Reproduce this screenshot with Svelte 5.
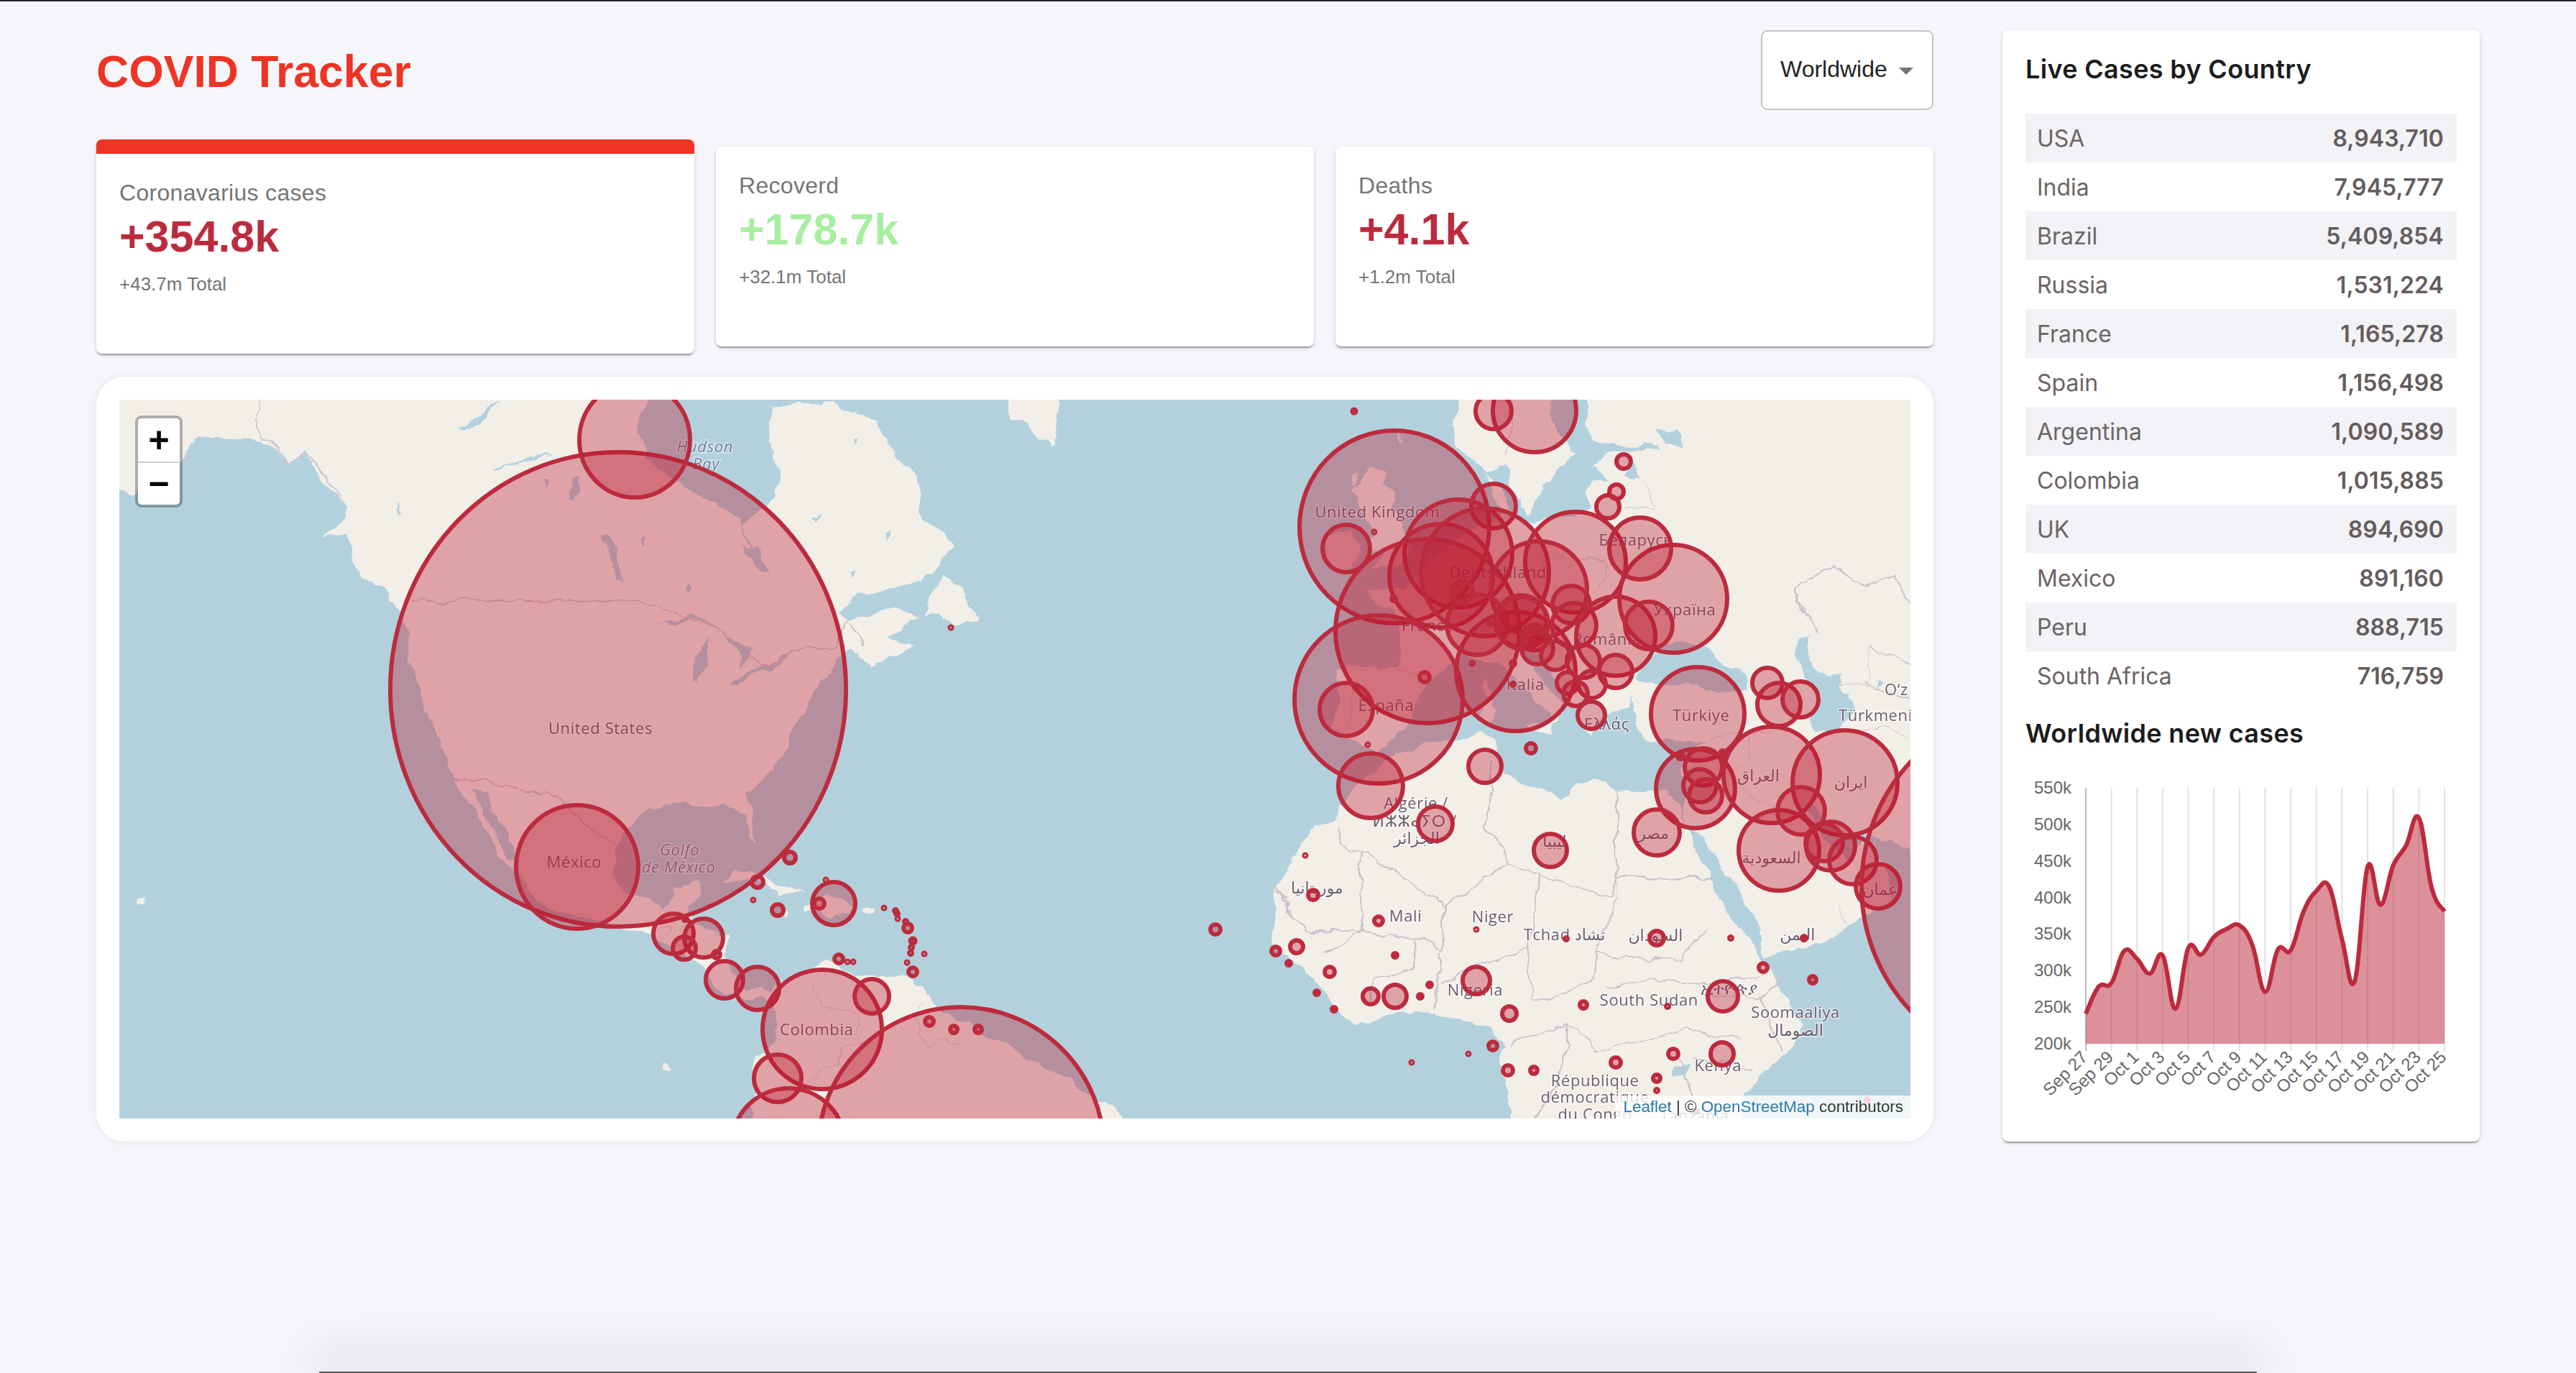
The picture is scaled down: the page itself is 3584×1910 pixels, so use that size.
<script lang="ts">
	const stats = [
		{ title: 'Coronavarius cases', value: '+354.8k', total: '+43.7m Total', tone: 'red', active: true },
		{ title: 'Recoverd', value: '+178.7k', total: '+32.1m Total', tone: 'green', active: false },
		{ title: 'Deaths', value: '+4.1k', total: '+1.2m Total', tone: 'red', active: false }
	];

	const countries = [
		['USA', '8,943,710'], ['India', '7,945,777'], ['Brazil', '5,409,854'], ['Russia', '1,531,224'],
		['France', '1,165,278'], ['Spain', '1,156,498'], ['Argentina', '1,090,589'], ['Colombia', '1,015,885'],
		['UK', '894,690'], ['Mexico', '891,160'], ['Peru', '888,715'], ['South Africa', '716,759']
	];

	// new cases per day, in thousands, Sep 27 to Oct 25
	const daily = [241, 278, 283, 327, 316, 296, 321, 248, 331, 322, 346, 357, 362, 335, 271, 329, 328, 381, 409, 415, 343, 286, 442, 390, 444, 471, 509, 413, 381];
	const ticks = ['Sep 27', 'Sep 29', 'Oct 1', 'Oct 3', 'Oct 5', 'Oct 7', 'Oct 9', 'Oct 11', 'Oct 13', 'Oct 15', 'Oct 17', 'Oct 19', 'Oct 21', 'Oct 23', 'Oct 25'];
	const yTicks = [550, 500, 450, 400, 350, 300, 250, 200];

	const plotL = 84, plotR = 583, plotT = 16, plotB = 372;
	const px = (i: number) => plotL + (i * (plotR - plotL)) / 28;
	const py = (v: number) => plotB - ((v - 200) * (plotB - plotT)) / 350;

	function smooth(values: number[]) {
		const pts = values.map((v, i) => [px(i), py(v)]);
		let d = `M${pts[0][0]} ${pts[0][1]}`;
		for (let i = 0; i < pts.length - 1; i++) {
			const p0 = pts[Math.max(i - 1, 0)], p1 = pts[i], p2 = pts[i + 1], p3 = pts[Math.min(i + 2, pts.length - 1)];
			const c1 = [p1[0] + (p2[0] - p0[0]) * 0.2, p1[1] + (p2[1] - p0[1]) * 0.2];
			const c2 = [p2[0] - (p3[0] - p1[0]) * 0.2, p2[1] - (p3[1] - p1[1]) * 0.2];
			d += `C${c1[0].toFixed(1)} ${c1[1].toFixed(1)} ${c2[0].toFixed(1)} ${c2[1].toFixed(1)} ${p2[0].toFixed(1)} ${p2[1].toFixed(1)}`;
		}
		return d;
	}
	const linePath = smooth(daily);
	const areaPath = `${linePath}L${plotR} ${plotB}L${plotL} ${plotB}Z`;

	// [x, y, rx, ry] in page pixels, ry falls back to rx
	const bubbles = [
		[860, 959, 317, 330], [883, 612, 77, 80], [803, 1206, 85, 86],
		[1054, 1227, 8], [1099, 1193, 8], [1048, 1252, 1.5], [1082, 1266, 8], [1160, 1257, 30], [1140, 1257, 7], [1149, 1224, 1.5],
		[1230, 1263, 1.5], [1246, 1267, 2], [1248, 1271, 2], [1249, 1278, 1.5], [1260, 1282, 2], [1263, 1291, 6], [1270, 1309, 3.5],
		[1268, 1318, 2], [1267, 1326, 2], [1286, 1327, 1.5], [1262, 1339, 1.5], [1270, 1352, 6], [1167, 1334, 6], [1179, 1338, 1.5], [1187, 1338, 1.5],
		[937, 1299, 28], [979, 1305, 27], [952, 1319, 16], [953, 1279, 2], [997, 1328, 5],
		[1008, 1363, 26], [1054, 1375, 30], [1144, 1432, 83], [1213, 1386, 24], [1082, 1500, 33], [1097, 1593, 79], [1337, 1600, 199],
		[1293, 1421, 6], [1327, 1432, 5], [1361, 1432, 5],
		[1884, 572, 2.5], [2135, 571, 58], [2078, 572, 25], [1940, 733, 132, 134], [1873, 763, 33], [1912, 740, 1.5],
		[2078, 704, 31], [2029, 770, 75], [2005, 801, 72], [1986, 878, 128], [2066, 796, 89], [1918, 973, 117], [1873, 987, 37],
		[1982, 942, 7], [1903, 1036, 1.5], [1907, 1093, 45], [2109, 934, 83], [2192, 782, 70], [2141, 820, 67], [2055, 869, 42],
		[2116, 864, 36], [2118, 867, 36], [2034, 823, 15], [1939, 833, 3], [2073, 868, 2], [2048, 923, 2], [2105, 923, 3], [2105, 952, 2],
		[2135, 887, 18], [2137, 885, 11], [2139, 902, 22], [2186, 841, 26], [2190, 870, 31], [2248, 885, 55], [2328, 833, 75],
		[2282, 763, 43], [2294, 870, 33], [2248, 934, 23], [2203, 920, 23], [2164, 912, 20], [2215, 952, 19], [2181, 950, 15], [2192, 965, 17],
		[2214, 995, 19], [2237, 705, 16], [2249, 684, 10], [2259, 642, 10], [2066, 1066, 23], [2130, 1041, 7], [1997, 1146, 24],
		[2362, 993, 65], [2359, 1097, 55], [2370, 1067, 26], [2338, 1052, 4], [2397, 1048, 4], [2365, 1093, 23], [2373, 1107, 23],
		[2305, 1158, 32], [2465, 1078, 67], [2567, 1089, 73], [2475, 1183, 56], [2506, 1128, 33], [2547, 1177, 34], [2538, 1172, 26],
		[2578, 1197, 33], [2613, 1233, 31], [2459, 950, 21], [2475, 980, 30], [2505, 973, 25], [2844, 1233, 254],
		[2305, 1305, 10], [2408, 1305, 2], [2510, 1305, 3], [2453, 1346, 6], [1323, 873, 1.5], [2157, 1183, 23], [1816, 1190, 1.5],
		[1827, 1245, 7], [1918, 1281, 6], [2054, 1293, 1.5], [2179, 1306, 2], [1691, 1293, 7], [1775, 1323, 6], [1804, 1317, 9], [1793, 1340, 3],
		[1850, 1352, 7], [1941, 1329, 3], [1832, 1381, 3], [1856, 1404, 3], [1907, 1386, 11], [1941, 1386, 16], [1976, 1386, 3], [1989, 1370, 3],
		[2054, 1364, 19], [2100, 1410, 10], [2203, 1398, 5], [2320, 1400, 2], [2397, 1386, 21], [2522, 1363, 5], [2077, 1455, 6], [2043, 1466, 1.5],
		[1964, 1478, 1.5], [2098, 1489, 7], [2134, 1489, 5], [2248, 1478, 7], [2328, 1466, 7], [2396, 1466, 16], [2305, 1500, 5], [2305, 1517, 2],
		[2360, 1546, 2], [2598, 1530, 2]
	];

	const a = (x: number, y: number) => [130 + x / 1.3635, 520 + y / 1.4255];
	const b = (x: number, y: number) => [1280 + x / 1.1042, 520 + y / 1.4255];

	const labels: { at: number[]; text: string; sea?: boolean }[] = [
		{ at: a(1160, 143), text: 'Hudson', sea: true }, { at: a(1162, 177), text: 'Bay', sea: true },
		{ at: a(962, 702), text: 'United States' }, { at: a(912, 967), text: 'México' },
		{ at: a(1112, 942), text: 'Golfo', sea: true }, { at: a(1110, 976), text: 'de México', sea: true },
		{ at: a(1372, 1298), text: 'Colombia' },
		{ at: b(703, 272), text: 'United Kingdom' }, { at: b(888, 392), text: 'Deutschland' }, { at: b(780, 498), text: 'France' },
		{ at: b(716, 656), text: 'España' }, { at: b(930, 614), text: 'Italia' }, { at: b(1055, 525), text: 'România' },
		{ at: b(1175, 466), text: 'Україна' }, { at: b(1100, 328), text: 'Беларусь' }, { at: b(1055, 693), text: 'Ελλάς' },
		{ at: b(1200, 676), text: 'Türkiye' }, { at: b(1500, 625), text: 'O‘z' }, { at: b(1468, 676), text: 'Türkmeni' },
		{ at: b(762, 850), text: 'Algérie /' }, { at: b(760, 885), text: 'ⵍⵣⵣⴰⵢⵔ /' }, { at: b(763, 920), text: 'الجزائر' },
		{ at: b(610, 1018), text: 'موريتانيا' }, { at: b(746, 1074), text: 'Mali' }, { at: b(880, 1075), text: 'Niger' },
		{ at: b(990, 1110), text: 'Tchad تشاد' }, { at: b(1130, 1112), text: 'السودان' }, { at: b(1127, 910), text: 'مصر' },
		{ at: b(975, 925), text: 'ليبيا' }, { at: b(1288, 795), text: 'العراق' }, { at: b(1430, 808), text: 'ايران' },
		{ at: b(1308, 958), text: 'السعودية' }, { at: b(1475, 1020), text: 'عمان' }, { at: b(1348, 1110), text: 'اليمن' },
		{ at: b(853, 1220), text: 'Nigeria' }, { at: b(1120, 1240), text: 'South Sudan' }, { at: b(1243, 1217), text: 'ኢትዮጵያ' },
		{ at: b(1345, 1265), text: 'Soomaaliya' }, { at: b(1345, 1300), text: 'الصومال' },
		{ at: b(1037, 1400), text: 'République' }, { at: b(1037, 1433), text: 'démocratique' }, { at: b(1037, 1467), text: 'du Congo' },
		{ at: b(1226, 1370), text: 'Kenya' }, { at: b(1190, 1470), text: 'Tanzania' }
	];
</script>

<div class="page">
	<main class="left">
		<header class="head">
			<h1>COVID Tracker</h1>
			<div class="select">
				<span>Worldwide</span>
				<i class="caret"></i>
			</div>
		</header>

		<section class="stats">
			{#each stats as s}
				<article class="stat" class:active={s.active}>
					<p class="stat-title">{s.title}</p>
					<p class="stat-value {s.tone}">{s.value}</p>
					<p class="stat-total">{s.total}</p>
				</article>
			{/each}
		</section>

		<section class="map-card">
			<div class="map">
				<svg viewBox="166 556 2492 1000" width="2492" height="1000">
					<defs>
						<filter id="coast" filterUnits="userSpaceOnUse" x="100" y="480" width="2640" height="1160">
							<feTurbulence type="fractalNoise" baseFrequency="0.03" numOctaves="4" seed="11" result="noise" />
							<feDisplacementMap in="SourceGraphic" in2="noise" scale="18" xChannelSelector="R" yChannelSelector="G" />
							<feGaussianBlur stdDeviation="0.7" />
						</filter>
					</defs>

					<rect x="166" y="556" width="2492" height="1000" fill="#b3d1dd" />

					<g filter="url(#coast)">
						<!-- land -->
						<g fill="#f2efe9">
							<g transform="translate(1760 556) scale(.3827)">
								<path d="M690 -100L700 30 680 110 700 170 740 210 790 265 840 320 850 410 790 460 700 500 640 560 540 650 510 690 440 680 370 690 420 745 490 790 500 950 480 975 300 965 260 985 280 1040 250 1130 250 1210 340 1250 400 1285 480 1220 530 1160 560 1080 650 970 720 930 800 950 850 950 920 1030 1000 1100 1040 1140 1020 1190 1060 1170 1090 1110 1040 1060 960 960 930 900 1000 930 1100 1090 1130 1120 1150 1190 1200 1225 1210 1170 1260 1130 1320 1110 1333 1073 1342 1117 1350 1186 1403 1247 1472 1234 1559 1247 1612 1239 1516 1308 1525 1422 1525 2400 3000 2400 3000 -100Z" />
								<path d="M380 250L440 250 420 310 470 330 460 400 510 500 540 540 480 600 390 610 440 560 370 540 410 490 360 420 320 340Z" />
								<path d="M220 510L300 470 345 560 290 612 230 600Z" />
								<path d="M800 1020L822 1030 820 1085 800 1075ZM790 1100L825 1100 820 1170 790 1165Z" />
								<path d="M960 1180L1040 1170 1030 1215 980 1205Z" />
								<path d="M495 130L505 135 500 170 490 165Z" />
								<path d="M330 270L345 260 335 310 320 320Z" />
							</g>

							<g transform="translate(1280 520) scale(.9056 .7015)">
								<path d="M712 770L670 810 640 860 645 880 600 905 580 950 560 985 545 1015 550 1060 545 1085 540 1130 590 1180 630 1240 665 1295 720 1275 790 1265 830 1280 880 1295 895 1325 895 1390 915 1520 1275 1520 1260 1430 1310 1370 1345 1320 1400 1200 1395 1175 1340 1180 1300 1150 1270 1150 1240 1090 1205 1010 1190 945 1175 900 1170 860 1150 830 1137 827 1071 826 1037 804 1007 809 991 847 953 826 898 787 885 722 864 716 800 727 733 755Z" />
								<path d="M125 0L225 0 205 145 170 110 140 85Z" />
								<path d="M10 480L15 440 40 395 60 420 90 490 60 500 30 480Z" />
							</g>

							<g transform="translate(130 520) scale(.7334 .7015)">
								<path d="M-40 -40L-40 180 75 240 90 205 160 180 200 120 240 130 310 135 345 150 370 178 400 150 430 205 485 265 470 300 435 320 480 325 510 405 545 425 585 470 600 560 630 660 685 805 720 860 775 960 810 1000 860 1060 950 1090 1060 1110 1100 1130 1140 1075 1100 1060 1010 1030 985 1000 985 940 1040 870 1100 852 1215 860 1240 880 1255 940 1255 905 1240 830 1310 760 1320 720 1360 640 1420 560 1440 545 1480 580 1560 540 1500 520 1568 480 1530 460 1430 490 1415 470 1450 440 1520 420 1568 415 1593 395 1630 340 1605 310 1568 285 1568 210 1500 130 1490 90 1400 60 1290 60 1280 130 1310 210 1290 250 1230 300 1250 360 1280 385 1240 340 1220 280 1150 240 1060 180 1030 130 1075 -40Z" />
								<path d="M80 1040L98 1035 95 1052 82 1052Z" />
							</g>

							<g transform="translate(880 1100) scale(.3333)">
								<path d="M0 565L60 575 110 625 170 670 230 690 300 740 310 790 350 820 420 860 470 880 500 880 540 850 590 890 610 920 605 1040 555 1090 510 1110 500 1200 530 1260 480 1300 510 1450 2150 1450 1879 1238 1553 1059 1281 912 1250 870 1170 790 1050 770 930 770 820 710 790 720 700 760 620 810 580 840 530 810 470 830 440 780 385 680 410 610 380 605 240 560 225 490 270 430 280 380 170 400 140 490 100 500 20 490 0 490Z" />
								<path d="M370 365L440 325 520 340 600 380 720 430 640 430 600 440 590 400 490 370Z" />
								<path d="M710 490L800 440 920 480 900 505 820 520 780 495 730 505Z" />
								<path d="M960 495L1010 495 1005 510 960 510Z" />
								<path d="M610 512L650 505 650 518 620 520Z" />
								<path d="M125 1135L150 1140 160 1165 130 1170Z" />
							</g>
						</g>

						<!-- water drawn back over the big land shapes -->
						<g fill="#b3d1dd">
							<g transform="translate(1760 556) scale(.3827)">
								<path d="M790 270L870 235 895 310 950 415 1000 345 1050 280 1130 190 1065 130 1050 60 1050 -100 1170 -100 1175 100 1200 140 1340 175 1430 165 1440 180 1330 190 1240 195 1200 240 1250 300 1200 300 1160 340 1185 385 1130 420 1050 430 960 445 900 420 880 420 880 340 860 305Z" />
								<path d="M1420 100L1500 110 1510 170 1450 150Z" />
								<path d="M1300 280L1350 240 1350 290Z" />
							</g>
							<g transform="translate(2200 900) scale(.3333)">
								<path d="M264 58L240 130 330 170 440 150 600 190 690 180 670 90 590 70 540 20 480 -15 400 -20 330 0Z" />
								<path d="M900 -40L950 -40 950 60 1000 110 1045 125 1085 110 1090 170 1135 280 1070 350 985 350 950 300 1000 200 940 110 890 50Z" />
								<path d="M770 1290L840 1280 1000 1240 1100 1170 1190 1120 1310 1040 1240 880 1230 790 1290 800 1374 850 1700 900 1700 2200 1230 2200 1220 1900 1000 1700 760 1300Z" />
								<path d="M450 765L480 770 520 800 560 880 620 970 660 1040 720 1120 750 1170 770 1290 800 1320 760 1310 720 1220 660 1180 620 1130 570 1040 560 980 505 900 490 850Z" />
								<path d="M950 640L985 690 1020 720 1060 770 1110 790 1190 780 1230 790 1220 830 1180 800 1140 880 1110 900 1060 830 1015 800 970 740 940 690Z" />
								<path d="M1245 145L1275 150 1250 175Z" />
							</g>
							<g transform="translate(1280 520) scale(.9056 .7015)">
								<path d="M1400 1200L1500 1140 1530 1520 1275 1520 1260 1430 1310 1370 1345 1320Z" />
								<path d="M1155 1372L1185 1372 1180 1395 1155 1392Z" />
							</g>
							<g transform="translate(130 520) scale(.7334 .7015)">
								<path d="M1075 503L1130 468 1190 510 1135 482Z" />
								<path d="M1140 618L1135 560 1170 525 1158 590Z" />
								<path d="M1200 525L1258 545 1225 585 1222 555Z" />
								<path d="M1210 615L1280 577 1330 550 1300 574 1228 618Z" />
								<path d="M968 325L982 325 1003 415 985 405Z" />
								<path d="M760 190L830 162 880 160 820 170 770 190Z" />
								<path d="M695 105L770 58 740 98 700 110Z" />
								<path d="M908 205L922 205 912 250 902 250Z" />
								<path d="M1128 422L1134 430 1128 440 1122 432Z" />
								<path d="M1230 345L1255 340 1280 390 1265 390Z" />
								<path d="M1355 285L1375 280 1365 295ZM1500 315L1515 310 1505 330ZM1430 385L1442 385 1436 400ZM1440 128L1450 125 1446 140ZM1120 205L1130 200 1125 215ZM850 215L865 212 858 228ZM570 250L580 275 572 280ZM1040 330L1052 326 1048 345Z" />
								<path d="M718 822L745 828 805 965 785 955Z" />
							</g>
						</g>

						<!-- borders -->
						<g fill="none" stroke="#cbbfcb" stroke-width="2.5">
							<g transform="translate(130 520) scale(.7334 .7015)">
								<path d="M312 -40L312 130 340 135 370 178 400 150 440 200 485 265" />
								<path d="M600 450L1025 450 1100 470 1190 510 1270 580 1340 545 1410 540 1425 490 1460 540" />
								<path d="M685 805L750 810 820 830 860 825 910 870 985 930" />
							</g>
							<g transform="translate(1280 520) scale(.9056 .7015)">
								<path d="M645 905L645 930 680 950 805 1050 870 1000 905 975 945 990 1060 1040 1070 1000 1070 830" />
								<path d="M675 950L680 1105 590 1110 545 1010" />
								<path d="M880 770L870 900 905 975" />
								<path d="M1070 1000L1220 1000" />
								<path d="M950 990L945 1095 930 1130 940 1240 1000 1230 1030 1200 1040 1140 1070 1040" />
								<path d="M805 1050L805 1140 760 1120 680 1105 620 1150" />
								<path d="M800 1145L790 1260M760 1125L760 1180 700 1200 690 1240M800 1205L930 1140" />
								<path d="M1040 1150L1170 1165 1210 1100M1050 1220L1120 1200 1210 1210 1300 1190" />
								<path d="M1210 1230L1290 1240 1340 1180M1290 1240L1320 1340M1000 1290L1040 1340 1180 1300 1260 1320" />
								<path d="M905 1330L1000 1290 980 1400 950 1477M1160 1340L1190 1440M1280 1380L1190 1360" />
								<path d="M1380 520L1340 430 1400 380 1450 420 1500 400 1522 450M1460 540L1522 580M1450 620L1522 640" />
							</g>
							<g transform="translate(880 1100) scale(.3333)">
								<path d="M110 560L165 560 160 600 110 620M230 540L210 600M800 760L750 820 790 890 870 920 950 930 940 1000 960 1060 870 1080 860 1140 720 1220M1210 1020L1230 1080 1310 1040 1380 1060M1210 880L1160 940 1210 1020" />
							</g>
							<g transform="translate(1760 556) scale(.3827)">
								<path d="M870 210L900 100 900 0M1310 400L1420 400 1370 300M1230 580L1240 650 1210 700M480 980L560 1010M320 1040L310 1200M1000 660L1020 600 1100 580 1230 580" />
							</g>
							<g transform="translate(2200 900) scale(.3333)">
								<path d="M147 590L147 1035 100 1045M147 962L550 962M1075 1070L1105 1150M1205 -10L1200 180 1090 160M540 380L640 370 740 360 830 350M660 580L810 680M700 360L700 480 640 510M1150 350L1250 330 1374 380" />
							</g>
						</g>
					</g>

					<!-- place names sit under the bubbles -->
					{#each labels as l}
						<text x={l.at[0]} y={l.at[1]} class="place" class:sea={l.sea}>{l.text}</text>
					{/each}

					{#each bubbles as c}
						<ellipse cx={c[0]} cy={c[1]} rx={c[2]} ry={c[3] ?? c[2]} class="bubble" />
					{/each}
				</svg>

				<div class="zoom">
					<button>+</button>
					<button>−</button>
				</div>
				<div class="attribution">
					<a href="#leaflet">Leaflet</a> | © <a href="#osm">OpenStreetMap</a> contributors
				</div>
			</div>
		</section>
	</main>

	<aside class="side">
		<h3>Live Cases by Country</h3>
		<div class="table">
			{#each countries as [name, cases]}
				<div class="row">
					<span>{name}</span>
					<strong>{cases}</strong>
				</div>
			{/each}
		</div>

		<h3 class="chart-title">Worldwide new cases</h3>
		<svg class="chart" viewBox="0 0 600 476" width="600" height="476">
			{#each ticks as t, i}
				<line x1={px(i * 2)} x2={px(i * 2)} y1={plotT} y2={plotB + 10} class="grid" class:first={i === 0} />
				<text class="x-tick" transform="translate({px(i * 2) + 4} {plotB + 20}) rotate(-45)">{t}</text>
			{/each}
			{#each yTicks as v}
				<text class="y-tick" x={plotL - 20} y={py(v) + 8}>{v}k</text>
			{/each}
			<path d={areaPath} class="area" />
			<path d={linePath} class="line" />
		</svg>
	</aside>

	<div class="dock"></div>
</div>

<style>
	:global(body) {
		margin: 0;
		background: #f4f6fb;
	}

	.page {
		display: flex;
		align-items: flex-start;
		gap: 96px;
		box-sizing: border-box;
		height: 1910px;
		overflow: hidden;
		padding: 40px 0 0 134px;
		border-top: 2px solid #232323;
		font-family: 'Liberation Sans', Arial, sans-serif;
	}

	.left {
		width: 2556px;
		flex: none;
	}

	.head {
		display: flex;
		align-items: center;
		justify-content: space-between;
		height: 111px;
	}

	h1 {
		margin: 0;
		padding-top: 3px;
		font-size: 62.5px;
		font-weight: 700;
		color: #ee3424;
	}

	.select {
		display: flex;
		align-items: center;
		gap: 16px;
		box-sizing: border-box;
		width: 240px;
		height: 111px;
		padding: 0 26px 3px 25px;
		background: #fff;
		border: 2px solid #c4c4c4;
		border-radius: 9px;
		font-size: 32px;
		color: #222;
	}

	.caret {
		width: 0;
		height: 0;
		margin-top: 5px;
		border-left: 10px solid transparent;
		border-right: 10px solid transparent;
		border-top: 10px solid #757575;
	}

	.stats {
		display: grid;
		grid-template-columns: repeat(3, 1fr);
		gap: 30px;
		align-items: center;
		margin-top: 41px;
	}

	.stat {
		box-sizing: border-box;
		height: 278px;
		padding: 32px;
		background: #fff;
		border-radius: 8px;
		box-shadow: 0 4px 2px -2px rgba(0, 0, 0, 0.2), 0 2px 2px rgba(0, 0, 0, 0.14), 0 2px 6px rgba(0, 0, 0, 0.12);
	}

	.stat.active {
		height: 298px;
		border-top: 20px solid #ee3424;
	}

	.stat p {
		margin: 0;
	}

	.stat-title {
		font-size: 32px;
		line-height: 44px;
		letter-spacing: 0.3px;
		color: #757575;
	}

	.stat-value {
		font-size: 61px;
		font-weight: 700;
		line-height: 78px;
	}

	.stat-value.red {
		color: #bc2b3d;
	}

	.stat-value.green {
		color: #a8eea0;
	}

	.stat .stat-total {
		margin-top: 10px;
		font-size: 26px;
		line-height: 34px;
		color: #757575;
	}

	.map-card {
		margin-top: 32px;
		padding: 32px;
		background: #fff;
		border-radius: 40px;
		box-shadow: 0 0 14px rgba(0, 0, 0, 0.07);
	}

	.map {
		position: relative;
		height: 1000px;
		overflow: hidden;
	}

	.map svg {
		display: block;
	}

	.bubble {
		fill: rgba(188, 28, 50, 0.36);
		stroke: #bc2b3d;
		stroke-width: 6;
	}

	.place {
		font-family: 'Open Sans', 'DejaVu Sans', sans-serif;
		font-size: 22px;
		letter-spacing: 0.6px;
		text-anchor: middle;
		dominant-baseline: central;
		fill: #6d5b70;
		stroke: rgba(255, 255, 255, 0.55);
		stroke-width: 3px;
		paint-order: stroke;
	}

	.place.sea {
		font-style: italic;
		fill: #6f7f9c;
	}

	.zoom {
		position: absolute;
		top: 22px;
		left: 22px;
		display: flex;
		flex-direction: column;
		overflow: hidden;
		border: 4px solid rgba(0, 0, 0, 0.28);
		border-radius: 9px;
	}

	.zoom button {
		width: 58px;
		height: 60px;
		padding: 0;
		border: 0;
		background: #fff;
		font: 700 50px/56px 'Liberation Sans', Arial, sans-serif;
		color: #000;
	}

	.zoom button + button {
		border-top: 2px solid #ccc;
	}

	.attribution {
		position: absolute;
		right: 0;
		bottom: 0;
		padding: 3px 10px;
		background: rgba(255, 255, 255, 0.8);
		font-size: 22.4px;
		line-height: 26px;
		color: #333;
	}

	.attribution a {
		color: #2a7aa8;
		text-decoration: none;
	}

	.side {
		box-sizing: border-box;
		width: 664px;
		flex: none;
		padding: 32px;
		background: #fff;
		border-radius: 8px;
		box-shadow: 0 4px 2px -2px rgba(0, 0, 0, 0.2), 0 2px 2px rgba(0, 0, 0, 0.14), 0 2px 6px rgba(0, 0, 0, 0.12);
		font-family: Inter, 'Liberation Sans', sans-serif;
	}

	h3 {
		margin: 0;
		font-size: 36px;
		font-weight: 600;
		line-height: 44px;
		letter-spacing: 0.33px;
		color: #1c1c1c;
	}

	.table {
		margin-top: 40px;
	}

	.row {
		display: flex;
		align-items: center;
		justify-content: space-between;
		height: 68px;
		padding: 0 18px 0 16px;
		font-size: 32px;
		color: #6c6464;
	}

	.row:nth-child(odd) {
		background: #f2f2f7;
	}

	.row strong {
		font-weight: 600;
		letter-spacing: 0.1px;
		color: #655c5c;
	}

	.chart-title {
		margin-top: 24px;
	}

	.chart {
		display: block;
		margin-top: 38px;
		font-family: 'Liberation Sans', Arial, sans-serif;
	}

	.grid {
		stroke: #e2e2e2;
		stroke-width: 2;
	}

	.grid.first {
		stroke: #bdbdbd;
	}

	.y-tick {
		font-size: 24px;
		fill: #666;
		text-anchor: end;
	}

	.x-tick {
		font-size: 24px;
		fill: #666;
		text-anchor: end;
	}

	.area {
		fill: rgba(188, 43, 61, 0.52);
	}

	.line {
		fill: none;
		stroke: #bc2b3d;
		stroke-width: 6;
	}

	.dock {
		position: fixed;
		left: 444px;
		top: 1908px;
		width: 2696px;
		height: 2px;
		background: #555;
		box-shadow: 0 -14px 60px 14px rgba(0, 0, 0, 0.11);
	}
</style>
